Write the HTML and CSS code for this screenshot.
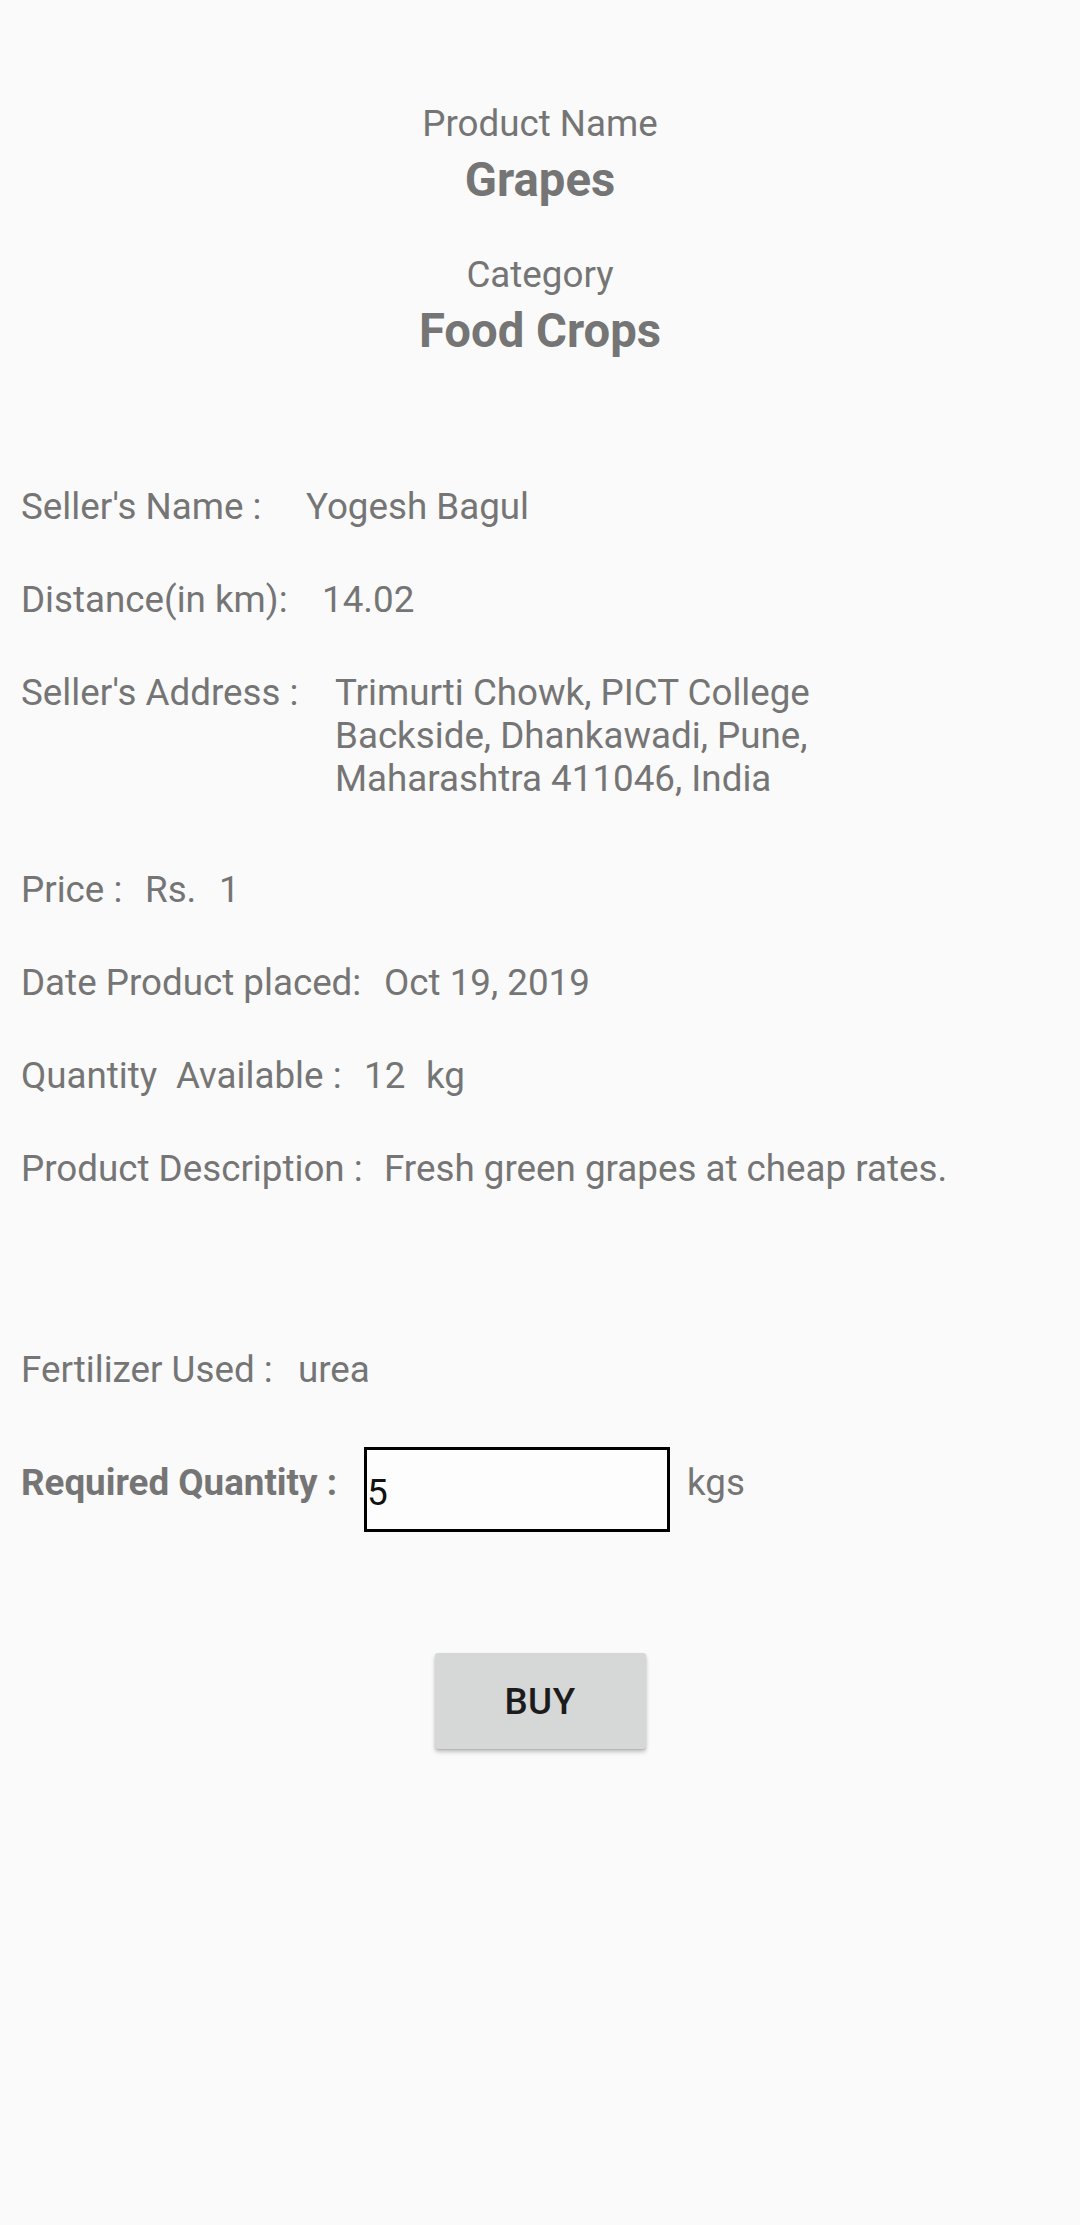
FILE: index.html
```html
<!DOCTYPE html>
<html lang="en">
<head>
<meta charset="utf-8">
<title>Product Details</title>
<link rel="stylesheet" href="styles.css">
</head>
<body>
<main class="page">
  <section class="head">
    <p class="caption">Product Name</p>
    <h1 class="title">Grapes</h1>
    <p class="caption caption-gap">Category</p>
    <h2 class="title">Food Crops</h2>
  </section>

  <section class="details">
    <div class="row">
      <span class="label w-name">Seller's Name :</span>
      <span class="value">Yogesh Bagul</span>
    </div>
    <div class="row">
      <span class="label w-dist">Distance(in km):</span>
      <span class="value">14.02</span>
    </div>
    <div class="row">
      <span class="label w-addr">Seller's Address :</span>
      <span class="value">Trimurti Chowk, PICT College<br>Backside, Dhankawadi, Pune,<br>Maharashtra 411046, India</span>
    </div>
    <div class="row row-after-addr">
      <span class="label w-price">Price :</span>
      <span class="label w-rs">Rs.</span>
      <span class="value">1</span>
    </div>
    <div class="row">
      <span class="label w-date">Date Product placed:</span>
      <span class="value">Oct 19, 2019</span>
    </div>
    <div class="row">
      <span class="label w-qty">Quantity</span>
      <span class="label w-avail">Available :</span>
      <span class="label w-num">12</span>
      <span class="value">kg</span>
    </div>
    <div class="row">
      <span class="label w-desc">Product Description :</span>
      <span class="value">Fresh green grapes at cheap rates.</span>
    </div>
    <div class="row row-fert">
      <span class="label w-fert">Fertilizer Used :</span>
      <span class="value">urea</span>
    </div>
    <div class="row row-req">
      <label class="label req-label" for="qty">Required Quantity :</label>
      <input class="qty-input" id="qty" type="text" value="5">
      <span class="unit">kgs</span>
    </div>
  </section>

  <div class="actions">
    <button class="buy" type="button">BUY</button>
  </div>
</main>
</body>
</html>
```

FILE: styles.css
```css
html, body {
  margin: 0;
  padding: 0;
  background: #fafafa;
}

body {
  font-family: Roboto, "Noto Sans", "Liberation Sans", sans-serif;
  color: #757575;
  font-size: 36.75px;
  line-height: 43px;
}

.page {
  display: flex;
  flex-direction: column;
  min-height: 2225px;
}

.head {
  display: flex;
  flex-direction: column;
  align-items: center;
  padding-top: 102px;
}

.caption {
  margin: 0;
  font-size: 36.75px;
  line-height: 43px;
  font-weight: 400;
}

.caption-gap {
  margin-top: 45px;
}

.title {
  margin: 8px 0 0;
  font-size: 47.25px;
  line-height: 55px;
  font-weight: 700;
}

.details {
  display: flex;
  flex-direction: column;
  gap: 50px;
  margin-top: 126px;
  padding-left: 21px;
}

.row {
  display: flex;
  align-items: flex-start;
  white-space: nowrap;
}

.row-after-addr { margin-top: 18px; }
.row-fert { margin-top: 108px; }
.row-req { margin-top: 6px; }

.label {
  flex: none;
}

.w-name { width: 285px; }
.w-dist { width: 301px; }
.w-addr { width: 314px; }
.w-price { width: 124px; }
.w-rs { width: 74px; }
.w-date { width: 363px; }
.w-qty { width: 155px; }
.w-avail { width: 188px; }
.w-num { width: 62px; }
.w-desc { width: 363px; }
.w-fert { width: 277px; }

.value {
  flex: none;
}

.req-label {
  width: 343px;
  margin-top: 14px;
  font-weight: 700;
}

.qty-input {
  box-sizing: border-box;
  width: 306px;
  height: 85px;
  margin: 0;
  padding: 6px 0 0;
  border: 3px solid #000;
  border-radius: 0;
  background: #fdfdfd;
  font-family: Roboto, "Noto Sans", sans-serif;
  font-size: 37px;
  color: #111;
  outline: none;
}

.unit {
  margin-left: 17px;
  margin-top: 14px;
}

.actions {
  display: flex;
  justify-content: center;
  margin-top: 121px;
}

.buy {
  width: 211px;
  height: 96px;
  border: none;
  border-radius: 3px;
  background: #d6d7d7;
  box-shadow: 0 3px 4px rgba(0, 0, 0, 0.22), 0 1px 2px rgba(0, 0, 0, 0.12);
  font-family: Roboto, "Noto Sans", sans-serif;
  font-size: 36.75px;
  font-weight: 500;
  color: #1c1c1c;
  letter-spacing: 0.5px;
  padding: 0;
}
```
